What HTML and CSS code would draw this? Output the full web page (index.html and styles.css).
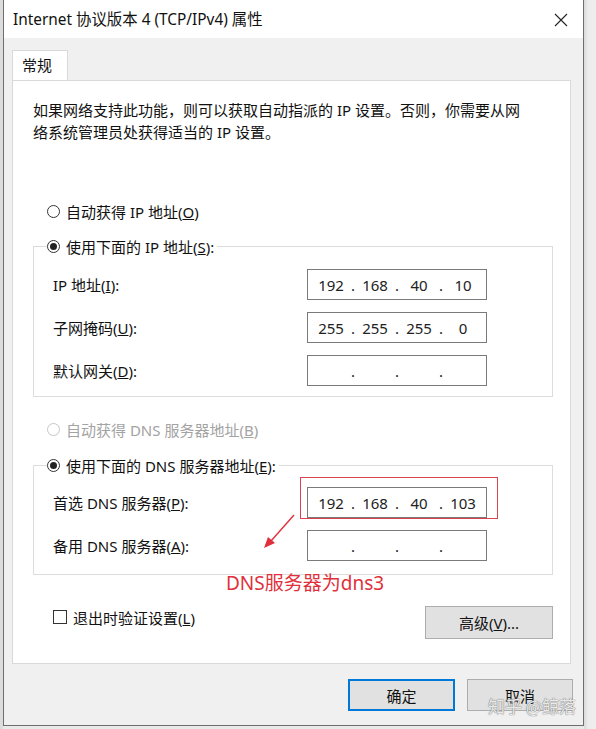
FILE: index.html
```html
<!DOCTYPE html>
<html lang="zh-CN">
    <head>
        <meta charset="UTF-8" />
        <meta name="viewport" content="width=device-width, initial-scale=1.0" />
        <title>Internet 协议版本 4 (TCP/IPv4) 属性</title>
        <link rel="stylesheet" href="styles.css">
    </head>
    <body>
        <div class="screen">
            <div class="backdrop"></div>

            <div class="window">
                <div class="titlebar">
                    <span class="title">Internet 协议版本 4 (TCP/IPv4) 属性</span>
                    <svg class="close" width="14" height="14" viewBox="0 0 14 14">
                        <path d="M1 1 L13 13 M13 1 L1 13" stroke="#222" stroke-width="1.1" fill="none" />
                    </svg>
                </div>

                <div class="client">
                    <div class="tabs">
                        <div class="tab">常规</div>
                    </div>

                    <div class="panel">
                        <p class="intro">
                            如果网络支持此功能，则可以获取自动指派的 IP 设置。否则，你需要从网<br />
                            络系统管理员处获得适当的 IP 设置。
                        </p>

                        <div class="radio first">
                            <span class="dot"></span>
                            <span>自动获得 IP 地址(<u>O</u>)</span>
                        </div>

                        <fieldset class="group">
                            <legend class="radio">
                                <span class="dot checked"></span>
                                <span>使用下面的 IP 地址(<u>S</u>):</span>
                            </legend>
                            <div class="rows">
                                <span>IP 地址(<u>I</u>):</span>
                                <div class="ip">
                                    <span>192</span><i>.</i><span>168</span><i>.</i><span>40</span><i>.</i><span>10</span>
                                </div>
                                <span>子网掩码(<u>U</u>):</span>
                                <div class="ip">
                                    <span>255</span><i>.</i><span>255</span><i>.</i><span>255</span><i>.</i><span>0</span>
                                </div>
                                <span>默认网关(<u>D</u>):</span>
                                <div class="ip">
                                    <span></span><i>.</i><span></span><i>.</i><span></span><i>.</i><span></span>
                                </div>
                            </div>
                        </fieldset>

                        <div class="radio disabled">
                            <span class="dot"></span>
                            <span>自动获得 DNS 服务器地址(<u>B</u>)</span>
                        </div>

                        <fieldset class="group dns">
                            <legend class="radio">
                                <span class="dot checked"></span>
                                <span>使用下面的 DNS 服务器地址(<u>E</u>):</span>
                            </legend>
                            <div class="rows">
                                <span>首选 DNS 服务器(<u>P</u>):</span>
                                <div class="ip marked">
                                    <span>192</span><i>.</i><span>168</span><i>.</i><span>40</span><i>.</i><span>103</span>
                                </div>
                                <span>备用 DNS 服务器(<u>A</u>):</span>
                                <div class="ip">
                                    <span></span><i>.</i><span></span><i>.</i><span></span><i>.</i><span></span>
                                </div>
                            </div>
                        </fieldset>

                        <div class="bottom-row">
                            <div class="check">
                                <span class="box"></span>
                                <span>退出时验证设置(<u>L</u>)</span>
                            </div>
                            <button class="btn advanced">高级(<u>V</u>)...</button>
                        </div>

                        <!-- red annotation drawn on top of the screenshot -->
                        <svg class="arrow" width="40" height="42" viewBox="0 0 40 42">
                            <path d="M35 4 L12 30" stroke="#e0303c" stroke-width="1.4" fill="none" />
                            <path d="M5 37 L9 26 L16 32 Z" fill="#e0303c" />
                        </svg>
                        <div class="note">DNS服务器为dns3</div>
                    </div>

                    <div class="actions">
                        <button class="btn default">确定</button>
                        <button class="btn">取消</button>
                    </div>
                </div>
            </div>

            <div class="shadow"></div>
            <div class="watermark">知乎 @鲸落</div>
        </div>
    </body>
</html>
```

FILE: styles.css
```css
* {
    box-sizing: border-box;
}
body {
    margin: 0;
    background: #e9e9e9;
    color: #111;
    font-family: 'Segoe UI', 'Noto Sans', 'Noto Sans CJK SC', sans-serif;
    font-size: 15px;
}
.screen {
    position: relative;
    display: flex;
    width: 596px;
    height: 729px;
    overflow: hidden;
}
.backdrop {
    width: 3px;
    background: #dcdcdc;
}
.shadow {
    flex: 1;
    background: linear-gradient(to right, #dadada, #ececec 4px, #eeeeee);
}
.window {
    width: 581px;
    height: 726px;
    border: 1px solid #6e6e6e;
    border-top: none;
    background: #f0f0f0;
    display: flex;
    flex-direction: column;
}

.titlebar {
    height: 38px;
    background: #fff;
    display: flex;
    align-items: center;
    justify-content: space-between;
    padding: 0 15px 0 9px;
}
.title {
    font-size: 15.4px;
    color: #111;
    margin-top: -1px;
}
.close {
    margin-top: 2px;
}

.client {
    flex: 1;
    padding: 12px 12px 0 8px;
}
.tabs {
    display: flex;
}
.tab {
    position: relative;
    width: 56px;
    height: 31px;
    padding-left: 9px;
    line-height: 29px;
    background: #fff;
    border: 1px solid #d9d9d9;
    border-bottom: none;
    margin-bottom: -1px;
}
.panel {
    position: relative;
    height: 584px;
    background: #fff;
    border: 1px solid #d9d9d9;
    padding: 18px 17px 0 20px;
}
.intro {
    margin: 0;
    line-height: 22px;
}

.radio {
    display: flex;
    align-items: center;
    gap: 6px;
    height: 24px;
    padding: 0 2px 0 0;
    margin-left: 14px;
}
.radio.first {
    margin-top: 56px;
}
.dot {
    position: relative;
    width: 13px;
    height: 13px;
    border: 1px solid #333;
    border-radius: 50%;
    background: #fff;
    flex-shrink: 0;
}
.dot.checked::after {
    content: '';
    position: absolute;
    left: 2px;
    top: 2px;
    width: 7px;
    height: 7px;
    border-radius: 50%;
    background: #222;
}
.radio.disabled {
    color: #a3a3a3;
    margin-top: 20px;
}
.radio.disabled .dot {
    border-color: #c6c6c6;
}

.group {
    margin: 11px 0 0;
    padding: 0 0 10px 0;
    border: 1px solid #dcdcdc;
    min-width: 0;
}
.group legend.radio {
    margin-left: 13px;
    padding-right: 3px;
}
.group.dns {
    margin-top: 12px;
    padding-bottom: 13px;
}
.rows {
    display: grid;
    grid-template-columns: 254px 180px;
    grid-auto-rows: 31px;
    row-gap: 12px;
    align-items: center;
    padding: 11px 0 0 19px;
}
.group.dns .rows {
    padding-top: 10px;
}

.ip {
    position: relative;
    height: 31px;
    border: 1px solid #7a7a7a;
    display: flex;
    align-items: center;
    padding-left: 8px;
    font-family: 'Segoe UI', 'Noto Sans', sans-serif;
    color: #222;
}
.ip span {
    width: 30px;
    text-align: center;
}
.ip i {
    font-style: normal;
    width: 14px;
    text-align: center;
}
.ip.marked::after {
    content: '';
    position: absolute;
    left: -8px;
    top: -11px;
    right: -12px;
    bottom: -2px;
    border: 1px solid #d9424e;
}

.bottom-row {
    display: flex;
    align-items: flex-start;
    justify-content: space-between;
    margin-top: 31px;
    padding-left: 20px;
}
.check {
    display: flex;
    align-items: center;
    gap: 6px;
    height: 22px;
}
.box {
    width: 14px;
    height: 14px;
    border: 1px solid #333;
    background: #fff;
}

.btn {
    font-family: inherit;
    font-size: 15px;
    color: #111;
    background: #e1e1e1;
    border: 1px solid #adadad;
    border-radius: 0;
    height: 33px;
    padding: 0;
}
.btn.advanced {
    width: 128px;
}
.actions {
    display: flex;
    justify-content: flex-end;
    gap: 12px;
    margin-top: 15px;
    margin-right: -2px;
}
.actions .btn {
    width: 106px;
    height: 32px;
}
.actions .btn.default {
    width: 107px;
    border: 2px solid #0078d7;
}

.arrow {
    position: absolute;
    left: 246px;
    top: 430px;
}
.note {
    position: absolute;
    left: 213px;
    top: 491px;
    font-size: 19px;
    line-height: 22px;
    color: #e0303c;
    font-family: 'Noto Sans', 'Noto Sans CJK SC', sans-serif;
}
.watermark {
    position: absolute;
    left: 488px;
    top: 693px;
    font-family: 'Noto Sans CJK SC', sans-serif;
    font-size: 17px;
    color: rgba(255, 255, 255, 0.85);
    text-shadow: 0 0 1px #777, 0 0 1px #777;
}
```
